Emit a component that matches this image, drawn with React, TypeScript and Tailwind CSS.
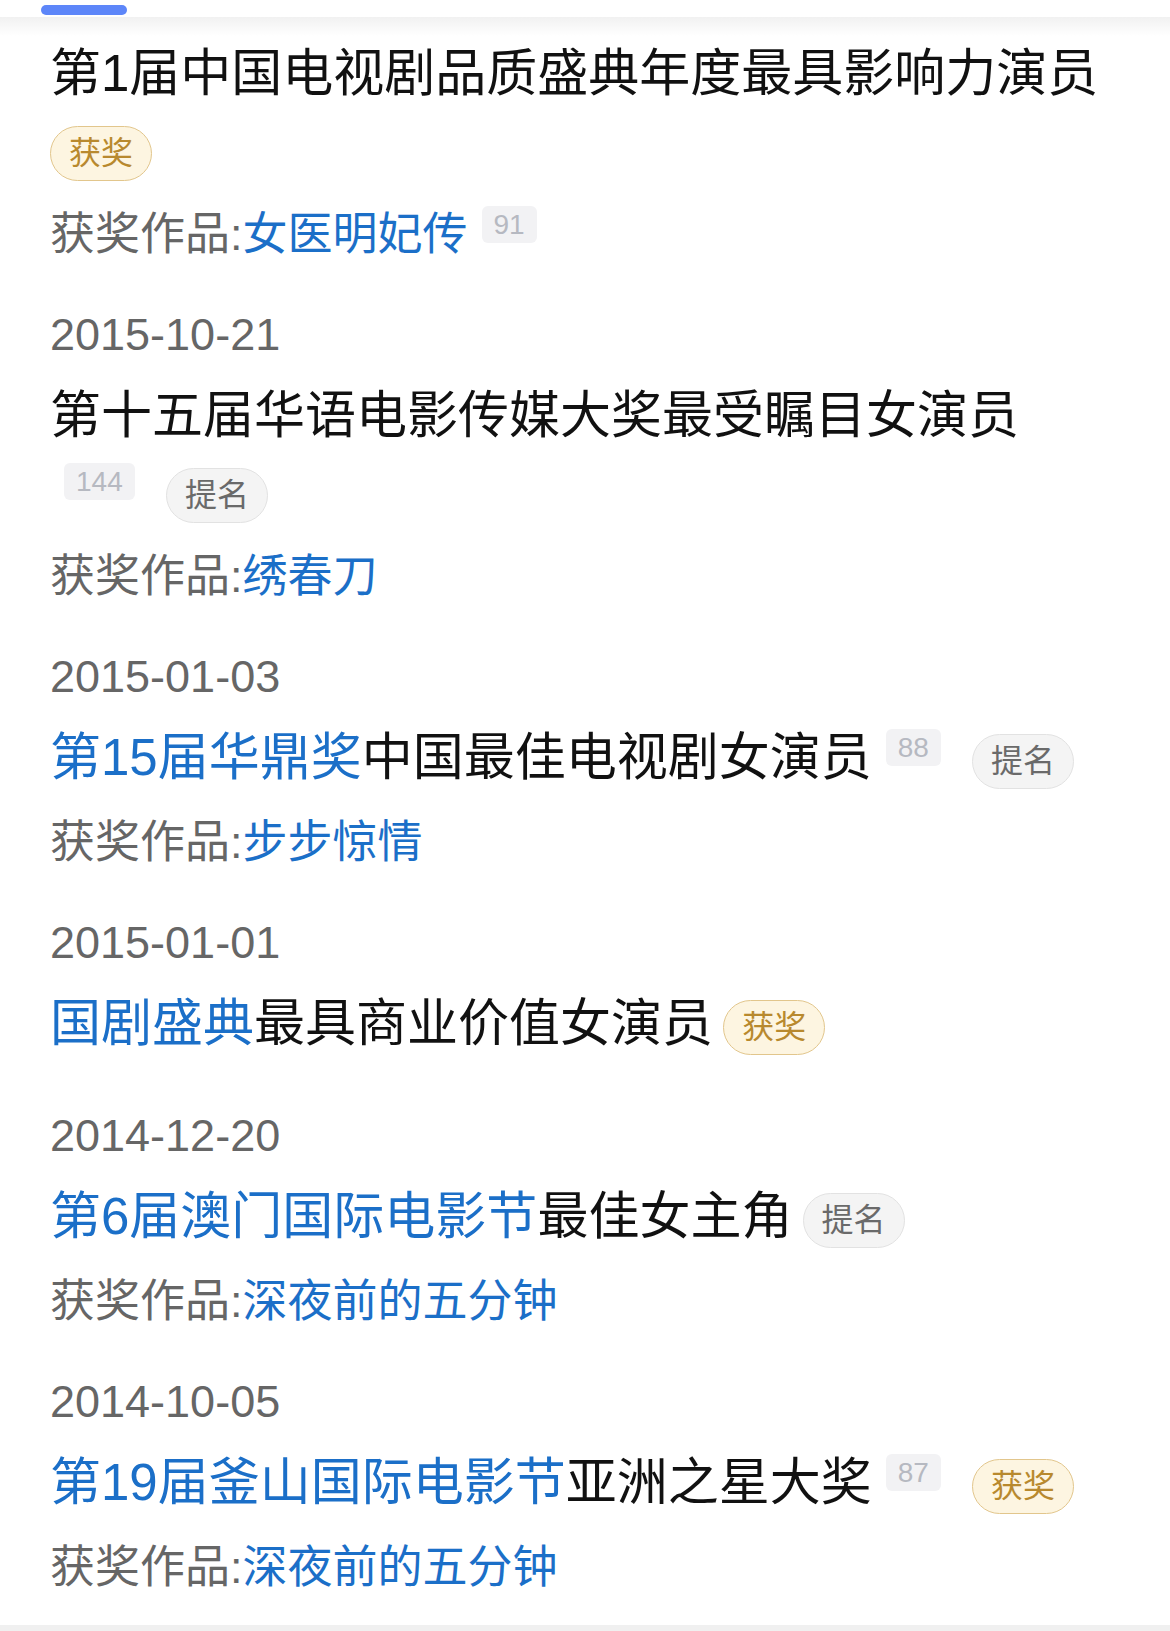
import React from 'react'

interface Part {
  text: string
  link?: boolean
}

interface Award {
  date?: string
  title: Part[]
  count?: number
  status: '获奖' | '提名'
  work?: string
  workCount?: number
}

const awards: Award[] = [
  {
    title: [{ text: '第1届中国电视剧品质盛典年度最具影响力演员' }],
    status: '获奖',
    work: '女医明妃传',
    workCount: 91,
  },
  {
    date: '2015-10-21',
    title: [{ text: '第十五届华语电影传媒大奖最受瞩目女演员' }],
    count: 144,
    status: '提名',
    work: '绣春刀',
  },
  {
    date: '2015-01-03',
    title: [{ text: '第15届华鼎奖', link: true }, { text: '中国最佳电视剧女演员' }],
    count: 88,
    status: '提名',
    work: '步步惊情',
  },
  {
    date: '2015-01-01',
    title: [{ text: '国剧盛典', link: true }, { text: '最具商业价值女演员' }],
    status: '获奖',
  },
  {
    date: '2014-12-20',
    title: [{ text: '第6届澳门国际电影节', link: true }, { text: '最佳女主角' }],
    status: '提名',
    work: '深夜前的五分钟',
  },
  {
    date: '2014-10-05',
    title: [{ text: '第19届釜山国际电影节', link: true }, { text: '亚洲之星大奖' }],
    count: 87,
    status: '获奖',
    work: '深夜前的五分钟',
  },
]

function Count({ value, className = '' }: { value: number; className?: string }) {
  return (
    <span
      className={`ml-[14px] inline-block rounded-[6px] bg-[#f2f2f4] px-[12px] align-super text-[28px] leading-[37px] text-[#b6b9c1] ${className}`}
    >
      {value}
    </span>
  )
}

function StatusTag({ status }: { status: Award['status'] }) {
  const won = status === '获奖'
  return (
    <span
      className={`inline-block rounded-full border px-[18px] align-middle text-[32px] leading-[53px] ${
        won
          ? 'border-[#e2c68c] bg-[#fdf5e1] text-[#b8892e]'
          : 'border-[#e2e2e2] bg-[#f4f4f4] text-[#6a6a6a]'
      }`}
    >
      {status}
    </span>
  )
}

export default function App() {
  return (
    <div className="min-h-screen bg-white font-['Liberation_Sans','Noto_Sans_CJK_SC',sans-serif]">
      {/* Tab indicator + shadow under the tab bar */}
      <div className="h-[17px] pl-[41px] pt-[5px]">
        <div className="h-[10px] w-[86px] rounded-full bg-[#5d86f9]" />
      </div>
      <div className="h-[19px] bg-gradient-to-b from-[#f1f1f1] to-white" />

      <div className="flex flex-col gap-[36px] pb-[25px] pl-[50px] pr-[70px]">
        {awards.map((a, i) => (
          <div key={i} className="flex flex-col">
            {a.date && (
              <div className="mb-[11px] text-[45px] leading-[64px] text-[#666]">{a.date}</div>
            )}
            {/* the space before the tag collapses when the tag wraps to a new line */}
            <div
              className={`text-[51px] leading-[76px] text-[#111] [word-spacing:-4px] ${a.work ? '' : 'mb-[6px]'}`}
            >
              {a.title.map((p, j) => (
                <span key={j} className={p.link ? 'text-[#1b6fc8]' : ''}>
                  {p.text}
                </span>
              ))}
              {a.count !== undefined && <Count value={a.count} className="mr-[21px]" />}{' '}
              <StatusTag status={a.status} />
            </div>
            {a.work && (
              <div className="mt-[15px] text-[45px] leading-[64px] text-[#666]">
                获奖作品:<span className="text-[#1b6fc8]">{a.work}</span>
                {a.workCount !== undefined && <Count value={a.workCount} />}
              </div>
            )}
          </div>
        ))}
      </div>

      <div className="h-[10px] bg-[#f0f0f0]" />
    </div>
  )
}
